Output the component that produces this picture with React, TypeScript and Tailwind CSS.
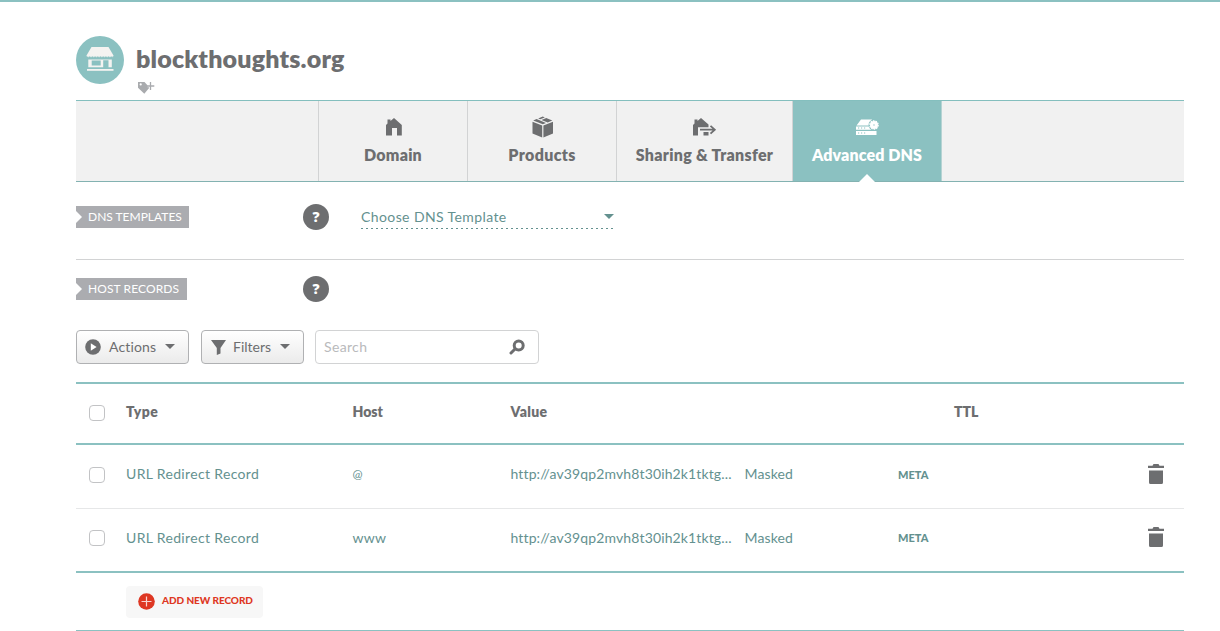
import type { ReactNode } from "react";

const StoreIcon = () => (
  <svg width="48" height="48" viewBox="0 0 48 48">
    <circle cx="24" cy="24" r="24" fill="#8bc1c1" />
    <path d="M15.500 11h17l5 8.500v.8h-27v-.8z" fill="#f4f3f1" />
    <path d="M11 20.300q1.350 2 2.700 0q1.350 2 2.700 0q1.350 2 2.700 0q1.350 2 2.700 0q1.350 2 2.700 0q1.350 2 2.700 0q1.350 2 2.700 0q1.350 2 2.700 0q1.350 2 2.700 0q1.050 2 1.600 0z" fill="#f4f3f1" />
    <path d="M12.300 23.500h23.500v7.700h-3.300v-7h-5.300v7h-14.900zM15.700 24.600v4.900h9v-4.900z" fill="#f4f3f1" fillRule="evenodd" />
    <path d="M11 33h26.500v1.800h-26.500z" fill="#f4f3f1" />
  </svg>
);

const TagPlusIcon = () => (
  <svg width="18" height="14" viewBox="0 0 18 14">
    <path d="M0 1h6.500l5 5.500-5.200 6.300L0 6.800zM2.700 2.300a1.100 1.100 0 1 0 0 2.200a1.100 1.100 0 0 0 0-2.200z" fill="#a9abae" fillRule="evenodd" />
    <path d="M12.500 1v8M9.500 5h7" stroke="#fff" strokeWidth="2.400" />
    <path d="M12.500 1v8M9 5h7.300" stroke="#a9abae" strokeWidth="1.300" />
  </svg>
);

const HomeIcon = () => (
  <svg width="16" height="18" viewBox="0 0 16 18">
    <path d="M0 17.500V7l1.500-1.500V1.500h3v1.400L8 0l7.800 7v10.500h-4.800V10h-5v7.500z" fill="#6d6e70" />
  </svg>
);

const BoxIcon = () => (
  <svg width="22" height="22" viewBox="0 0 22 22" fill="#6d6e70">
    <path d="M0.500 5.800l9.700 3.600v12L0.500 17.600zM21 5.800l-9.600 3.600v12L21 17.600z" />
    <path d="M1.200 4.500l3.400-1.400 9.400 3.900-3.200 1.300zM6.200 2.500l4.600-1.900 2 .8-4.600 1.900zM9.500 3.900l4.700-1.900 6.100 2.500-4.600 1.900z" />
  </svg>
);

const ShareIcon = () => (
  <svg width="24" height="18" viewBox="0 0 24 18">
    <path d="M0 17.500V7l1.500-1.500V1.500h3v1.400L8 0l7.500 6.500v2.800H5v8.200zM10.500 14h5v3.500h-5z" fill="#6d6e70" />
    <path d="M7 11.700h14M17.500 7.800l4.300 3.900-4.300 4" fill="none" stroke="#6d6e70" strokeWidth="1.800" />
  </svg>
);

const ServerIcon = () => (
  <svg width="25" height="17" viewBox="0 0 25 17">
    <path d="M6 .5h11L14 6.500H1.500zM1 7.500h20.500V10.700H1zM1 12h20.500v4H1z" fill="#fff" />
    <path d="M3 9h1.200M6 9h1.200M9 9h1.200M3 14h1.200M6 14h1.200M9 14h1.200" stroke="#8bc1c1" strokeWidth="1.200" />
    <circle cx="19" cy="6" r="5.500" fill="#8bc1c1" />
    <circle cx="19" cy="6" r="4" fill="#fff" />
    <circle cx="19" cy="6" r="4.200" fill="none" stroke="#fff" strokeWidth="1.200" strokeDasharray="1.600 1" />
    <circle cx="19" cy="6" r=".7" fill="#8bc1c1" />
  </svg>
);

const Caret = ({ className }: { className: string }) => (
  <svg width="10" height="5" viewBox="0 0 10 5" className={className} fill="currentColor">
    <path d="M0 0h10L5 5z" />
  </svg>
);

const TrashIcon = () => (
  <svg width="16" height="20" viewBox="0 0 16 20" fill="#6d6e70">
    <path d="M0 1.800h4.500L5.500 0h5l1 1.800H16V4H0zM1 6.500h14V18.500q0 1.500-1.500 1.500h-11q-1.500 0-1.500-1.500z" />
  </svg>
);

const SectionTag = ({ children, className }: { children: ReactNode; className: string }) => (
  <div className={`flex h-[22px] items-center bg-[#abacb0] text-[12px] leading-none text-white ${className}`}>
    <svg width="6" height="12" viewBox="0 0 6 12" className="mr-1.5">
      <path d="M0 0l6 6-6 6z" fill="#fff" />
    </svg>
    <span className="whitespace-nowrap">{children}</span>
  </div>
);

const Help = () => (
  <div className="grid size-[26px] place-items-center rounded-full bg-[#6d6e70] font-['Open_Sans',sans-serif] text-[14px] leading-none font-extrabold text-white">
    ?
  </div>
);

const Tab = ({ icon, label, className, active }: { icon: ReactNode; label: string; className: string; active?: boolean }) => (
  <div
    className={`relative flex flex-col items-center border-r text-[16px] font-extrabold ${className} ${
      active ? "border-[#b5d3d3] bg-[#8bc1c1] text-white" : "border-[#d2d3d4] text-[#6d6e70]"
    }`}
  >
    <div className="mt-[15px] flex h-[22px] items-center pl-px">{icon}</div>
    <div className="mt-[7px] leading-5 whitespace-nowrap">{label}</div>
    {active && (
      <svg width="16" height="8" viewBox="0 0 16 8" className="absolute -bottom-px left-[66px]">
        <path d="M8 0l8 8H0z" fill="#fff" />
      </svg>
    )}
  </div>
);

const Checkbox = () => <div className="size-4 rounded-[4px] border border-[#c2c3c5] bg-white" />;

const columns = "grid grid-cols-[50px_226.500px_158px_234px_153.500px_250px_36px] items-center";

const Row = ({ host, hostClass, className, metaClass }: { host: string; hostClass: string; className: string; metaClass: string }) => (
  <div className={`${columns} text-[14px] text-[#64918f] ${className}`}>
    <div className="pl-[13px]"><Checkbox /></div>
    <div className="-mt-[2px] tracking-[0.340px]">URL Redirect Record</div>
    <div className={`-mt-[2px] ${hostClass}`}>{host}</div>
    <div className="-mt-[2px] tracking-[0.130px]">http://av39qp2mvh8t30ih2k1tktg...</div>
    <div className="-mt-[2px] tracking-[0.130px]">Masked</div>
    <div className={`text-[11px] font-black ${metaClass}`}>META</div>
    <div className="-mt-[2px]"><TrashIcon /></div>
  </div>
);

export default function App() {
  return (
    <div className="h-[631px] overflow-hidden border-t-2 border-[#8bc1c1] bg-white font-[Lato,sans-serif] text-[#6d6e70]">
      <main className="ml-[76px] w-[1108px]">
        <header className="flex h-[98px] pt-[34px]">
          <StoreIcon />
          <div className="ml-3">
            <h1 className="mt-[6px] text-[25px] leading-8 font-extrabold tracking-[0.170px]">blockthoughts.org</h1>
            <div className="mt-[7px] ml-[2px]"><TagPlusIcon /></div>
          </div>
        </header>

        <nav className="flex h-[82px] border-y border-[#84bfbe] border-b-[#83b2b1] bg-[#f1f1f1]">
          <div className="w-[243px] border-r border-[#d2d3d4]" />
          <Tab icon={<HomeIcon />} label="Domain" className="w-[149px] tracking-[0.200px]" />
          <Tab icon={<BoxIcon />} label="Products" className="w-[149px] tracking-[0.350px]" />
          <Tab icon={<ShareIcon />} label="Sharing & Transfer" className="w-[176px] tracking-[0.300px]" />
          <Tab icon={<ServerIcon />} label="Advanced DNS" className="w-[149px] tracking-[0.100px]" active />
        </nav>

        <section className="flex h-[78px] items-start border-b border-[#d2d3d4] pt-[22px]">
          <div className="w-[227px] pt-[2px]">
            <SectionTag className="w-[113px]">DNS TEMPLATES</SectionTag>
          </div>
          <Help />
          <div className="ml-8 w-[253px]">
            <div className="flex h-[24px] items-center justify-between text-[14px] text-[#64918f]">
              <span className="tracking-[0.400px]">Choose DNS Template</span>
              <Caret className="mt-px text-[#64918f]" />
            </div>
            <svg width="253" height="1" viewBox="0 0 253 1" className="block">
              <path d="M0 .5h253" stroke="#64918f" strokeDasharray="2 3" />
            </svg>
          </div>
        </section>

        <section className="flex h-[70px] items-start pt-4">
          <div className="w-[227px] pt-[2px]">
            <SectionTag className="w-[111px] tracking-[0.100px]">HOST RECORDS</SectionTag>
          </div>
          <Help />
        </section>

        <div className="flex h-[52px] items-start text-[14px]">
          <button className="flex h-[34px] w-[113px] items-center rounded-[4px] border border-[#b0b1b3] bg-linear-to-b from-white to-[#ebebeb] pl-2">
            <svg width="16" height="16" viewBox="0 0 16 16">
              <circle cx="8" cy="8" r="7.800" fill="#6d6e70" />
              <path d="M5.800 4.200l5.800 3.800-5.800 3.800z" fill="#fff" />
            </svg>
            <span className="-mt-[2px] ml-[8px] w-[56px] text-left tracking-[0.150px]">Actions</span>
            <Caret className="-mt-px" />
          </button>
          <button className="ml-3 flex h-[34px] w-[103px] items-center rounded-[4px] border border-[#b0b1b3] bg-linear-to-b from-white to-[#ebebeb] pl-[9px]">
            <svg width="15" height="15" viewBox="0 0 15 15">
              <path d="M0 0h15L9.500 8v5.500L5.800 15V8z" fill="#6d6e70" />
            </svg>
            <span className="-mt-[2px] ml-[7px] w-[47px] text-left tracking-[0.020px]">Filters</span>
            <Caret className="-mt-px" />
          </button>
          <div className="ml-[11px] flex h-[34px] w-[224px] items-center justify-between rounded-[4px] border border-[#d2d3d4] bg-white pr-[13px] pl-2">
            <span className="-mt-[2px] tracking-[0.350px] text-[#b9babc]">Search</span>
            <svg width="16" height="16" viewBox="0 0 16 16" fill="none" stroke="#6d6e70">
              <circle cx="9.700" cy="6.500" r="4.500" strokeWidth="3" />
              <path d="M6 10L2 14" strokeWidth="3" strokeLinecap="round" />
            </svg>
          </div>
        </div>

        <div className={`${columns} h-[63px] border-y-2 border-[#8bc1c1] pb-[2px] text-[14px] font-extrabold`}>
          <div className="pl-[13px]"><Checkbox /></div>
          <div className="-mt-[3px] tracking-[0.400px]">Type</div>
          <div className="-mt-[3px]">Host</div>
          <div className="-mt-[3px] tracking-[0.300px]">Value</div>
          <div />
          <div className="-mt-[3px] pl-[56px]">TTL</div>
        </div>
        <Row host="@" hostClass="text-[12px]" className="h-[64px] border-b border-[#e6e7e8] pb-[4px]" metaClass="mt-[2px]" />
        <Row host="www" hostClass="tracking-[0.200px]" className="h-[64px] border-b-2 border-[#8bc1c1] pb-[4px]" metaClass="" />
        <div className="h-[58px] border-b border-[#8bc1c1] pt-[13px] pl-[50px]">
          <button className="flex h-8 w-[137px] items-center rounded-[4px] bg-[#f7f7f7] pb-[2px] pl-3 text-[10px] font-black tracking-[-0.060px] whitespace-nowrap text-[#de3723]">
            <svg width="17" height="17" viewBox="0 0 17 17" className="mr-[7px]">
              <circle cx="8.500" cy="8.500" r="8.300" fill="#de3723" />
              <path d="M8.500 3.500v10M3.500 8.500h10" stroke="#f9d6d2" strokeWidth="1.200" />
            </svg>
            <span className="-mt-[2px]">ADD NEW RECORD</span>
          </button>
        </div>
      </main>
    </div>
  );
}
